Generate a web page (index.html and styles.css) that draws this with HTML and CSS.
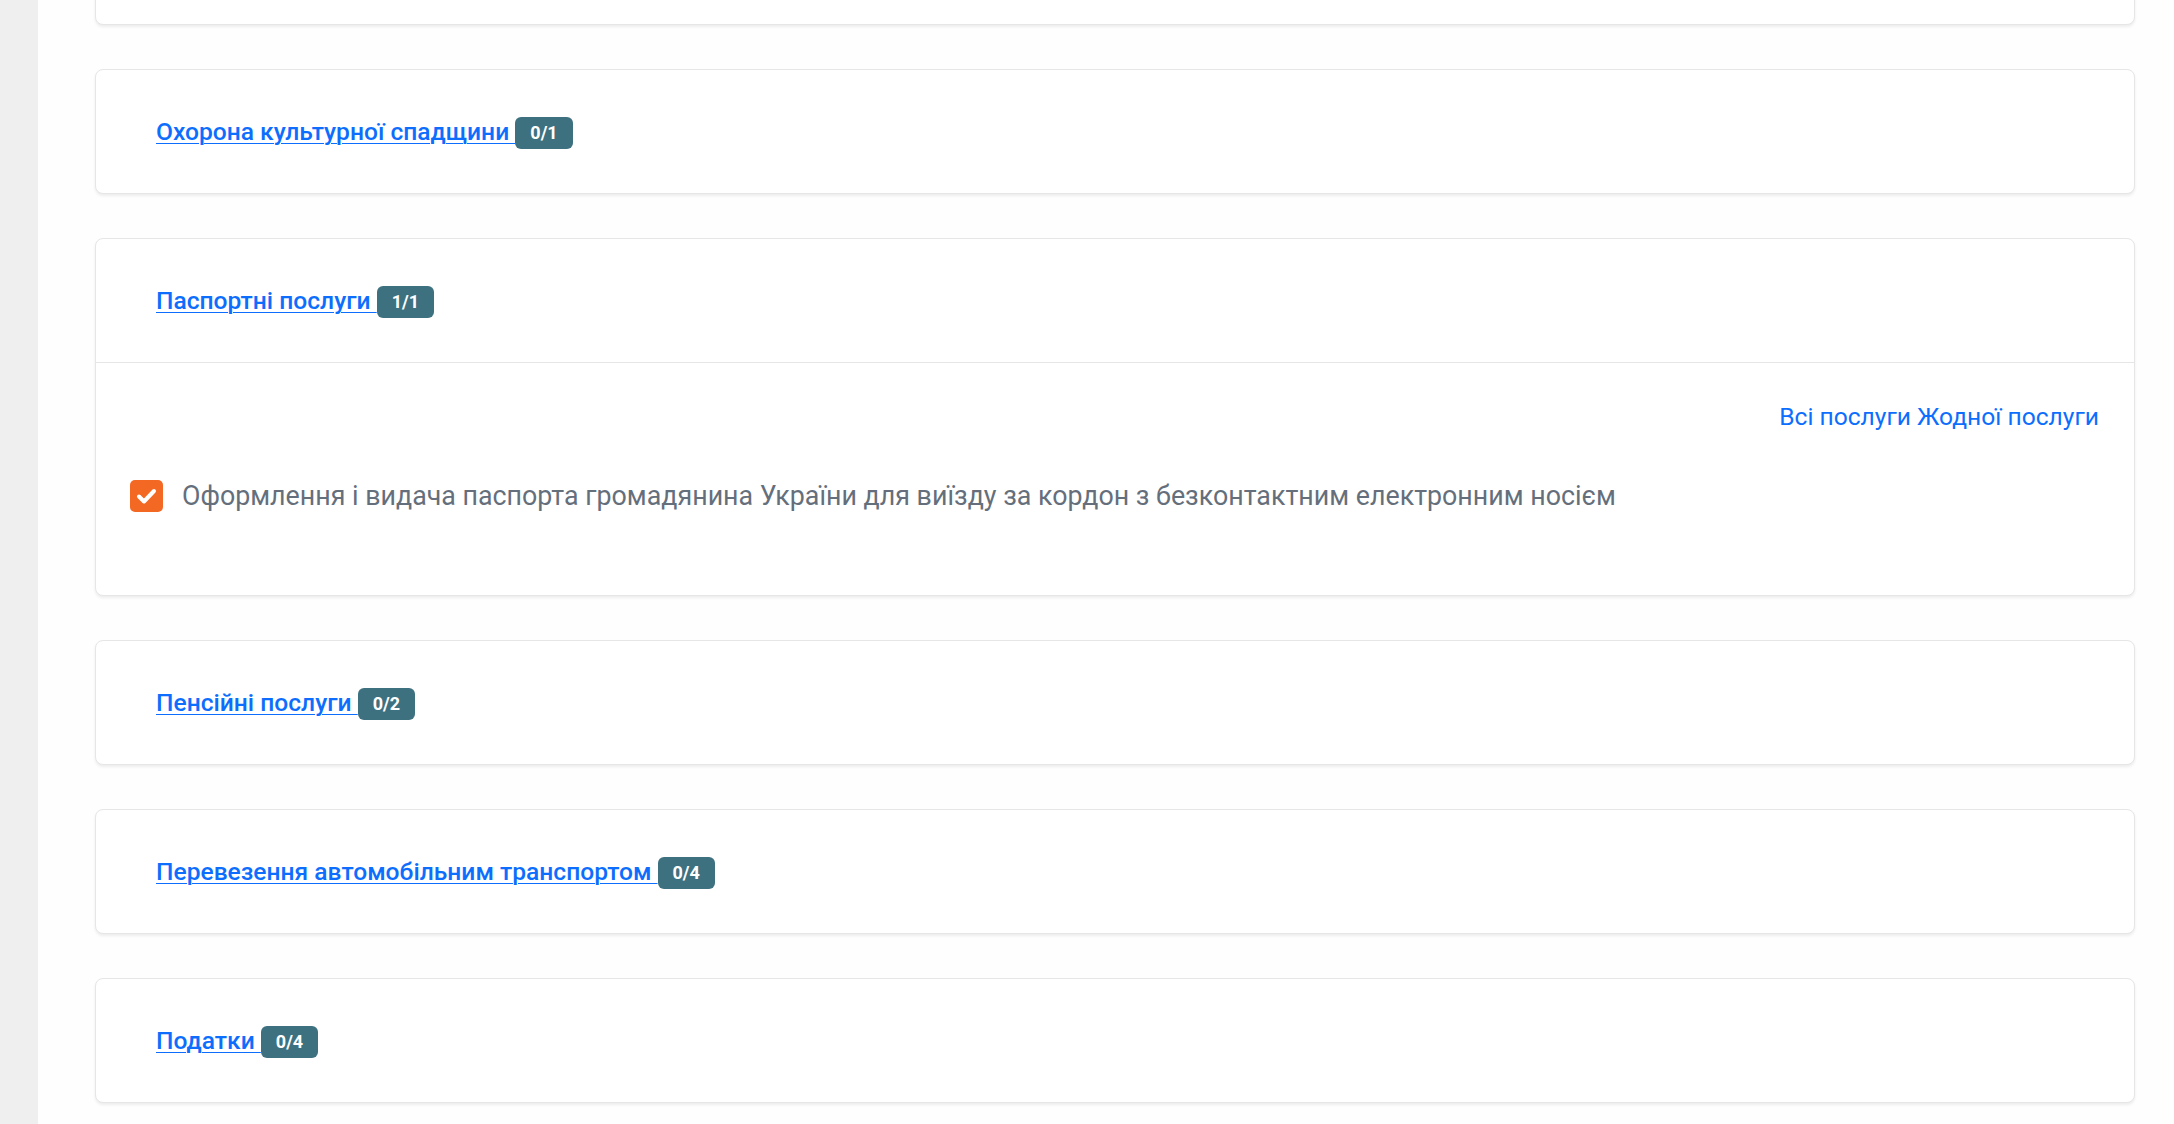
FILE: index.html
```html
<!DOCTYPE html>
<html lang="uk">
<head>
    <meta charset="UTF-8">
    <title>Послуги</title>
    <meta name="viewport" content="width=device-width, initial-scale=1.0">
    <link rel="stylesheet" href="styles.css">
</head>
<body>

    <div class="page">
        <!-- ліва смуга -->
        <div class="side"></div>

        <div class="groups">
            <!-- картка, що пішла за верхній край -->
            <div class="group group-cut">
                <div class="group-head"></div>
            </div>

            <div class="group">
                <div class="group-head">
                    <a href="#" class="group-link">Охорона культурної спадщини <span class="count">0/1</span></a>
                </div>
            </div>

            <div class="group">
                <div class="group-head open">
                    <a href="#" class="group-link">Паспортні послуги <span class="count">1/1</span></a>
                </div>
                <div class="group-body">
                    <div class="pick-all">
                        <a href="#">Всі послуги</a> <a href="#">Жодної послуги</a>
                    </div>
                    <label class="service">
                        <span class="check">
                            <svg viewBox="0 0 33 32" width="33" height="32"><path d="M9 16.5l5 5L24 11" fill="none" stroke="#fff" stroke-width="4" stroke-linecap="round" stroke-linejoin="round"/></svg>
                        </span>
                        Оформлення і видача паспорта громадянина України для виїзду за кордон з безконтактним електронним носієм
                    </label>
                </div>
            </div>

            <div class="group">
                <div class="group-head">
                    <a href="#" class="group-link">Пенсійні послуги <span class="count">0/2</span></a>
                </div>
            </div>

            <div class="group">
                <div class="group-head">
                    <a href="#" class="group-link">Перевезення автомобільним транспортом <span class="count">0/4</span></a>
                </div>
            </div>

            <div class="group">
                <div class="group-head">
                    <a href="#" class="group-link">Податки <span class="count">0/4</span></a>
                </div>
            </div>
        </div>
    </div>

</body>
</html>
```

FILE: styles.css
```css
html, body {
  margin: 0; padding: 0; height: 100%; overflow: hidden;
  font-family: Roboto, "Noto Sans", "Liberation Sans", sans-serif; color: #333; background-color: #fefefe;
}
.page { display: flex; height: 100vh; }
.side { flex: 0 0 38px; background-color: #efefef; }
.groups { flex: 1 1 auto; display: flex; flex-direction: column; gap: 44px; padding: 0 39px 0 57px; margin-top: -100px; }

.group { background-color: #fff; border: 1px solid #e6e6e6; border-radius: 8px; box-shadow: 0 2px 3px rgba(0,0,0,0.07); }
.group-head { height: 121px; display: flex; align-items: center; padding: 2px 60px 0; }
.group-head.open { border-bottom: 1px solid #e6e6e6; }
.group-link { font-size: 24.6px; font-weight: 500; color: #0d6efd; text-decoration: underline; text-underline-offset: 3px; text-decoration-thickness: 1px; }
.count { display: inline-block; background-color: #3d7180; color: #fff; font-size: 18px; font-weight: 700; line-height: 32px; padding: 0 15px; border-radius: 6px; vertical-align: 1px; }

.group-body { height: 232px; box-sizing: border-box; padding: 40px 35px 0 34px; }
.pick-all { text-align: right; font-size: 24.6px; line-height: 28px; }
.pick-all a { color: #0d6efd; text-decoration: none; }
.service { display: flex; align-items: center; gap: 19px; margin-top: 49px; font-size: 26.8px; color: #656f7c; cursor: pointer; }
.check { flex: 0 0 33px; height: 32px; background-color: #f36823; border-radius: 5px; display: flex; }
```
